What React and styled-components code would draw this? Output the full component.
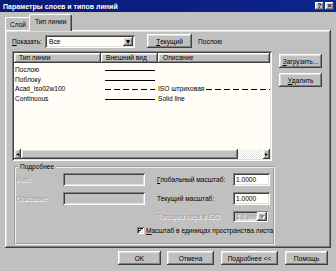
import styled, { createGlobalStyle } from "styled-components";

const GlobalStyle = createGlobalStyle`
  html, body { margin: 0; padding: 0; background: #c0c0c0; overflow: hidden; }
  * { box-sizing: border-box; }
`;

const raised = `box-shadow: inset -1px -1px #404040, inset 1px 1px #ffffff, inset -2px -2px #808080, inset 2px 2px #dfdfdf;`;
const sunken = `box-shadow: inset 1px 1px #808080, inset -1px -1px #ffffff, inset 2px 2px #404040, inset -2px -2px #dfdfdf;`;

export default function App() {
  return (
    <Window>
      <GlobalStyle />
      <TitleBar>
        <Title>Параметры слоев и типов линий</Title>
        <TitleButtons>
          <TitleButton>?</TitleButton>
          <TitleButton>×</TitleButton>
        </TitleButtons>
      </TitleBar>
      <Body>
        <Tabs>
          <Tab>Слой</Tab>
          <Tab active>Тип линии</Tab>
        </Tabs>
        <Panel>
          <FilterRow>
            <Label><u>П</u>оказать:</Label>
            <Select>
              <span>Все</span>
              <ArrowBox>▾</ArrowBox>
            </Select>
            <Button w={45}><u>Т</u>екущий</Button>
            <Current>Послою</Current>
          </FilterRow>
          <Content>
            <List>
              <Header>
                <HeadCell w={87}>Тип линии</HeadCell>
                <HeadCell w={57}>Внешний вид</HeadCell>
                <HeadCell w={112}>Описание</HeadCell>
              </Header>
              <Rows>
                <Row>
                  <NameCell>Послою</NameCell>
                  <LookCell><Line /></LookCell>
                  <DescCell />
                </Row>
                <Row>
                  <NameCell>Поблоку</NameCell>
                  <LookCell><Line /></LookCell>
                  <DescCell />
                </Row>
                <Row>
                  <NameCell>Acad_iso02w100</NameCell>
                  <LookCell><Line dashed /></LookCell>
                  <DescCell>ISO штриховая <Line dashed /></DescCell>
                </Row>
                <Row>
                  <NameCell>Continuous</NameCell>
                  <LookCell><Line /></LookCell>
                  <DescCell>Solid line</DescCell>
                </Row>
              </Rows>
              <ScrollBar>
                <ScrollArrow>◂</ScrollArrow>
                <Thumb />
                <Track />
                <ScrollArrow>▸</ScrollArrow>
              </ScrollBar>
            </List>
            <SideButtons>
              <Button w={43}><u>З</u>агрузить...</Button>
              <Button w={43}><u>У</u>далить</Button>
            </SideButtons>
          </Content>
          <Group>
            <Legend>Подробнее</Legend>
            <Fields>
              <FieldLabel disabled>Имя:</FieldLabel>
              <Input w={82} disabled />
              <FieldLabel><u>Г</u>лобальный масштаб:</FieldLabel>
              <Input w={37}>1.0000</Input>

              <FieldLabel disabled>Описание:</FieldLabel>
              <Input w={82} disabled />
              <FieldLabel>Текущий масштаб:</FieldLabel>
              <Input w={37}>1.0000</Input>

              <span />
              <span />
              <FieldLabel disabled>Толщина пера в ISO:</FieldLabel>
              <SmallSelect>
                <span>1.0 мм</span>
                <ArrowBox disabled>▾</ArrowBox>
              </SmallSelect>
            </Fields>
            <CheckRow>
              <CheckBox>✓</CheckBox>
              <span><u>М</u>асштаб в единицах пространства листа</span>
            </CheckRow>
          </Group>
        </Panel>
        <Footer>
          <Button w={43}>OK</Button>
          <Button w={47}>Отмена</Button>
          <Button w={57}>Подробнее &lt;&lt;</Button>
          <Button w={43}>Помощь</Button>
        </Footer>
      </Body>
    </Window>
  );
}

const Window = styled.div`
  width: 336px;
  height: 271px;
  background: #c0c0c0;
  display: flex;
  flex-direction: column;
  font-family: "Liberation Sans", Arial, sans-serif;
  font-size: 6.6px;
  color: #000;
  overflow: hidden;
  u { text-decoration: underline; }
`;

const TitleBar = styled.div`
  height: 12px;
  background: linear-gradient(90deg, #0a1a78, #0c248c);
  display: flex;
  align-items: center;
  justify-content: space-between;
  padding: 0 2px 0 3px;
`;

const Title = styled.span`
  color: #fff;
  font-weight: bold;
  font-size: 7px;
`;

const TitleButtons = styled.div`
  display: flex;
  gap: 1px;
`;

const TitleButton = styled.div`
  width: 9px;
  height: 8px;
  background: #c0c0c0;
  ${raised}
  font-size: 7px;
  font-weight: bold;
  line-height: 8px;
  text-align: center;
`;

const Body = styled.div`
  flex: 1;
  display: flex;
  flex-direction: column;
  padding: 1px 5px 0 5px;
`;

const Tabs = styled.div`
  height: 17px;
  display: flex;
  align-items: flex-end;
  position: relative;
  z-index: 1;
`;

const Tab = styled.div`
  height: ${p => (p.active ? 17 : 13)}px;
  padding: ${p => (p.active ? "3px 5px 0" : "3px 4px 0")};
  margin-left: ${p => (p.active ? -2 : 0)}px;
  margin-bottom: ${p => (p.active ? -1 : 0)}px;
  background: #c0c0c0;
  border-top: 1px solid #fff;
  border-left: 1px solid #fff;
  border-right: 1px solid #404040;
  border-radius: 2px 2px 0 0;
  box-shadow: inset -1px 0 #808080;
`;

const Panel = styled.div`
  height: 218px;
  ${raised}
  padding: 4px 6px 0 7px;
  display: flex;
  flex-direction: column;
`;

const FilterRow = styled.div`
  height: 14px;
  display: flex;
  align-items: center;
`;

const Label = styled.span`
  width: 33px;
`;

const Select = styled.div`
  width: 90px;
  height: 13px;
  background: #fffdf6;
  ${sunken}
  display: flex;
  align-items: center;
  justify-content: space-between;
  padding: 2px 2px 2px 4px;
  margin-right: 12px;
`;

const ArrowBox = styled.div`
  width: 10px;
  height: 9px;
  background: #c0c0c0;
  ${raised}
  font-size: 8px;
  line-height: 9px;
  text-align: center;
  color: ${p => (p.disabled ? "#808080" : "#000")};
`;

const Button = styled.div`
  width: ${p => p.w}px;
  height: 14px;
  background: #c0c0c0;
  ${raised}
  display: flex;
  align-items: center;
  justify-content: center;
  white-space: nowrap;
`;

const Current = styled.span`
  margin-left: 6px;
`;

const Content = styled.div`
  display: flex;
  gap: 7px;
  margin-top: 3px;
`;

const List = styled.div`
  width: 260px;
  height: 110px;
  background: #fffdf6;
  ${sunken}
  padding: 2px;
  display: flex;
  flex-direction: column;
`;

const Header = styled.div`
  display: flex;
  height: 10px;
`;

const HeadCell = styled.div`
  width: ${p => p.w}px;
  height: 10px;
  background: #c0c0c0;
  ${raised}
  padding: 1px 0 0 5px;
  line-height: 8px;
  white-space: nowrap;
  overflow: hidden;
`;

const Rows = styled.div`
  flex: 1;
  padding-top: 2px;
  overflow: hidden;
`;

const Row = styled.div`
  display: flex;
  height: 9.5px;
  align-items: center;
  white-space: nowrap;
`;

const NameCell = styled.div`
  width: 87px;
  padding-left: 1px;
`;

const LookCell = styled.div`
  width: 57px;
  padding: 0 3px 0 4px;
  display: flex;
`;

const DescCell = styled.div`
  flex: 1;
  display: flex;
  align-items: center;
  gap: 2px;
  overflow: hidden;
`;

const Line = styled.div`
  flex: 1;
  height: 1px;
  min-width: 20px;
  margin-top: 2px;
  background: ${p =>
    p.dashed
      ? "repeating-linear-gradient(90deg, #000 0 6px, transparent 6px 9px)"
      : "#000"};
`;

const ScrollBar = styled.div`
  height: 10px;
  display: flex;
`;

const ScrollArrow = styled.div`
  width: 7px;
  height: 10px;
  background: #c0c0c0;
  ${raised}
  font-size: 6px;
  line-height: 10px;
  text-align: center;
`;

const Thumb = styled.div`
  width: 217px;
  background: #c0c0c0;
  ${raised}
`;

const Track = styled.div`
  flex: 1;
  background: repeating-conic-gradient(#e8e8e8 0 25%, #ffffff 0 50%) 0 0 / 2px 2px;
`;

const SideButtons = styled.div`
  display: flex;
  flex-direction: column;
  gap: 5px;
  padding-top: 3px;
`;

const Group = styled.fieldset`
  margin: 2px 0 0 2px;
  width: 258px;
  height: 82px;
  border: 2px groove #f0f0f0;
  padding: 3px 0 0 0;
`;

const Legend = styled.legend`
  padding: 0 2px;
  margin-left: 2px;
`;

const Fields = styled.div`
  display: grid;
  grid-template-columns: 47px 94px 76px 37px;
  row-gap: 6px;
  align-items: center;
  justify-items: start;
`;

const FieldLabel = styled.span`
  white-space: nowrap;
  color: ${p => (p.disabled ? "#9a9a9a" : "#000")};
  text-shadow: ${p => (p.disabled ? "1px 1px #ffffff" : "none")};
`;

const Input = styled.div`
  width: ${p => p.w}px;
  height: 13px;
  background: ${p => (p.disabled ? "#c0c0c0" : "#fffdf6")};
  ${sunken}
  padding: 3px 3px 0;
  line-height: 8px;
`;

const SmallSelect = styled.div`
  width: 35px;
  height: 11px;
  background: #c0c0c0;
  ${sunken}
  display: flex;
  align-items: center;
  justify-content: space-between;
  padding: 1px 1px 1px 3px;
  color: #9a9a9a;
  text-shadow: 1px 1px #fff;
`;

const CheckRow = styled.div`
  display: flex;
  align-items: center;
  gap: 2px;
  margin: 5px 0 0 121px;
  white-space: nowrap;
`;

const CheckBox = styled.div`
  width: 7px;
  height: 7px;
  background: #fff;
  ${sunken}
  font-size: 6px;
  line-height: 7px;
  text-align: center;
  font-weight: bold;
`;

const Footer = styled.div`
  display: flex;
  margin-top: 3px;
  padding-left: 113px;
  gap: 6px;
  & > :nth-child(3) { margin-left: 1px; }
  & > :nth-child(4) { margin-left: 1px; }
`;
